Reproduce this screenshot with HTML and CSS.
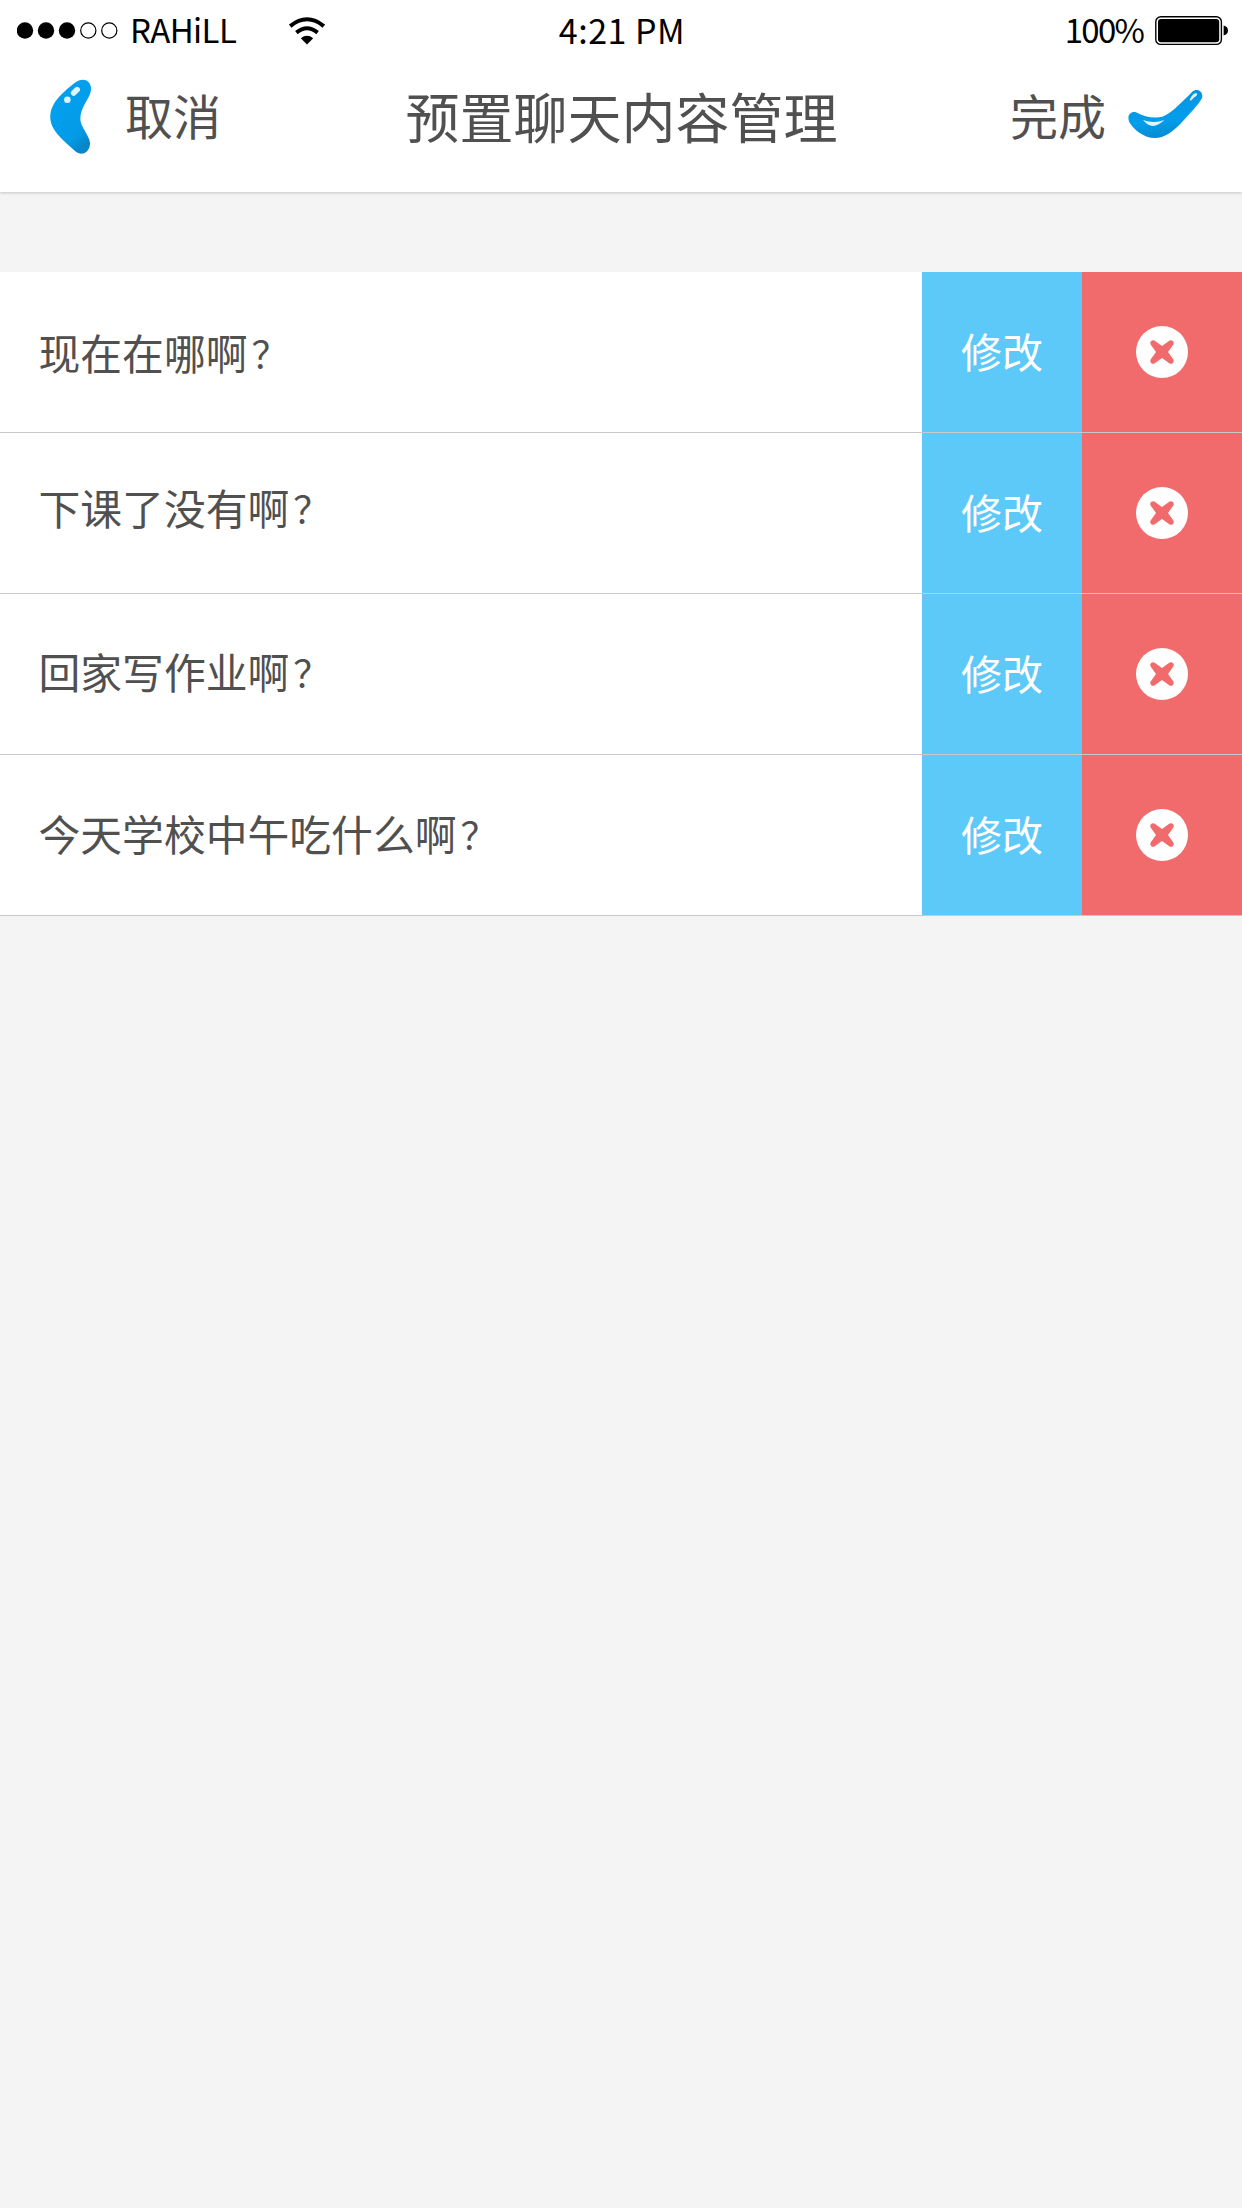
FILE: index.html
```html
<!DOCTYPE html>
<html lang="zh-CN">
<head>
<meta charset="utf-8">
<title>预置聊天内容管理</title>
<link rel="stylesheet" href="styles.css">
</head>
<body>
<svg width="0" height="0" class="defs" aria-hidden="true">
  <symbol id="remove" viewBox="-26 -26 52 52">
    <circle r="26" fill="#fff"/>
    <path fill="#f26b6c" d="M0-6-7.6-11.4A2.8 2.8 0 0 0-11.4-7.6L-6 0-11.4 7.6A2.8 2.8 0 0 0-7.6 11.4L0 6 7.6 11.4A2.8 2.8 0 0 0 11.4 7.6L6 0 11.4-7.6A2.8 2.8 0 0 0 7.6-11.4Z"/>
  </symbol>
</svg>
<header class="header">
  <div class="status">
    <div class="carrier">
      <svg class="signal" width="102" height="18" viewBox="0 0 102 18">
        <circle cx="8" cy="8.500" r="8.2"/><circle cx="29" cy="8.500" r="8.2"/><circle cx="50" cy="8.500" r="8.2"/>
        <g fill="#fff" stroke="#000" stroke-width="1.2"><circle cx="71.3" cy="8.500" r="7.6"/><circle cx="92.300" cy="8.500" r="7.6"/></g>
      </svg>
      <span class="carrier-name">RAHiLL</span>
      <svg class="wifi" width="36" height="28" viewBox="0 0 36 28">
        <path d="M1.2 9.2Q18-4.6 34.8 9.2M7.4 15.6Q18 7 28.6 15.6" fill="none" stroke="#000" stroke-width="4"/>
        <path d="M11.8 21.2Q18 16.4 24.2 21.2L18 27.6Z"/>
      </svg>
    </div>
    <div class="time">4:21 PM</div>
    <div class="power">
      <span class="percent">100%</span>
      <svg class="battery" width="74" height="30" viewBox="0 0 74 30">
        <rect x=".8" y=".8" width="65.6" height="27.6" rx="5" fill="#fff" stroke="#000" stroke-width="1.4"/>
        <rect x="3" y="3" width="61.2" height="23.2" rx="3"/>
        <path d="M68.6 9.5Q73 10.5 73 14.5T68.6 19.5Z"/>
      </svg>
    </div>
  </div>
  <nav class="nav">
    <a class="action">
      <svg class="back" width="42" height="76" viewBox="0 0 42 76">
        <defs><linearGradient id="bean" x1=".1" y1="0" x2=".6" y2="1"><stop offset="0" stop-color="#0598e4"/><stop offset=".3" stop-color="#02a0ee"/><stop offset=".82" stop-color="#049ae6"/><stop offset="1" stop-color="#0886c9"/></linearGradient></defs>
        <path fill="url(#bean)" d="M25 3.7C32-2 41 1 41 9.5C41 15 38 19 34.5 25.5C30 34 29 41 32.3 47C35 53 40 59 40 64.5C40 73 32 78 25 72C17 65 8 57 3.8 50C-1.5 41-.8 32 5 23C10 16 18 9 25 3.7Z"/>
        <g stroke="#e1f3fc" stroke-linecap="round"><path stroke-width="5.6" d="M23.7 14 27.2 10.6"/><path stroke-width="6.4" d="M17.3 20.7h.1"/></g>
      </svg>
      <span class="label">取消</span>
    </a>
    <h1 class="title">预置聊天内容管理</h1>
    <a class="action">
      <span class="label">完成</span>
      <svg class="check" width="75" height="50" viewBox="0 0 75 50">
        <defs><linearGradient id="tick" x1=".3" y1=".1" x2=".5" y2="1"><stop offset="0" stop-color="#0694e0"/><stop offset=".6" stop-color="#029eeb"/><stop offset="1" stop-color="#0789d0"/></linearGradient></defs>
        <path fill="url(#tick)" d="M1.500 33.500C-1.500 27 2 22 8 23.200C17 28 26 30 35 27.500C45 23 56 11 64 3C69-2 76 3 74 9C71 15 64 22 55 32C45 43 36 49 27 49C16 49 6 41 1.500 33.500Z"/>
        <path fill="#e1f3fc" d="M15 31C22 33.500 30 33.500 36 31C35.500 32.500 29 37 25 37C21 37 16.500 33 15 31Z"/>
        <path fill="#e1f3fc" d="M62 10Q64.500 5 67.500 4.300C70 4 69.500 6.500 67.500 7.500C65 8.500 64.500 11 63 11.500Q61.500 12 62 10Z"/>
      </svg>
    </a>
  </nav>
</header>
<main class="list">
  <div class="row first"><div class="message"><span>现在在哪啊</span><span class="mark">？</span></div><a class="edit">修改</a><a class="delete"><svg width="52" height="52"><use href="#remove"/></svg></a></div>
  <div class="row second"><div class="message"><span>下课了没有啊</span><span class="mark">？</span></div><a class="edit">修改</a><a class="delete"><svg width="52" height="52"><use href="#remove"/></svg></a></div>
  <div class="row third"><div class="message"><span>回家写作业啊</span><span class="mark">？</span></div><a class="edit">修改</a><a class="delete"><svg width="52" height="52"><use href="#remove"/></svg></a></div>
  <div class="row"><div class="message"><span>今天学校中午吃什么啊</span><span class="mark">？</span></div><a class="edit">修改</a><a class="delete"><svg width="52" height="52"><use href="#remove"/></svg></a></div>
</main>
</body>
</html>
```
FILE: styles.css
```css
* { box-sizing: border-box; }
body {
  margin: 0;
  min-height: 2208px;
  background: #f4f4f4;
  color: #505050;
  font-family: "Noto Sans CJK SC", "Noto Sans", sans-serif;
  white-space: nowrap;
}
svg { display: block; flex: none; }
.defs { display: none; }
.header {
  height: 192px;
  background: #fff;
  box-shadow: 0 1px 3px rgba(0, 0, 0, .2);
}
.status {
  display: grid;
  grid-template-columns: 1fr auto 1fr;
  align-items: center;
  height: 60px;
  padding: 0 13px 0 17px;
  color: #000;
  font-size: 33px;
  line-height: 58px;
}
.carrier, .power { display: flex; align-items: center; }
.carrier-name { width: 141px; margin-left: 11px; padding-bottom: 4px; letter-spacing: -.6px; }
.wifi { margin-left: 18px; }
.time { margin-right: 2px; padding-bottom: 3px; font-size: 34px; letter-spacing: .5px; }
.power { justify-content: flex-end; gap: 12px; }
.battery { margin-bottom: 1px; }
.percent { padding-bottom: 4px; letter-spacing: -1.8px; }
.nav {
  display: grid;
  grid-template-columns: 1fr auto 1fr;
  align-items: center;
  height: 114px;
  padding: 0 39px 0 50px;
}
.action { display: flex; align-items: center; font-size: 48px; line-height: 70px; }
.label { padding-bottom: 7px; }
.action:first-child { gap: 33px; }
.action:last-child { justify-content: flex-end; gap: 22px; }
.check { margin-bottom: 7px; }
.title { margin: 0 10px 2px 0; font-size: 54px; font-weight: 400; line-height: 78px; }
.list { margin-top: 80px; }
.row {
  display: grid;
  grid-template-columns: 1fr 160px 160px;
  height: 161px;
  border-bottom: 1px solid #c9c9c9;
  background: #fff;
  font-size: 41.8px;
}
.message { display: flex; align-items: center; padding: 0 0 5px 38.5px; }
.mark { padding: 2px 0 0 4px; font-size: 37px; }
.first .message { padding-bottom: 1px; }
.second .message { padding-bottom: 12px; }
.third .message { padding-bottom: 7px; }
.edit, .delete { display: flex; align-items: center; justify-content: center; color: #fff; }
.edit { padding-bottom: 5px; background: #5dc9f8; font-size: 41px; }
.delete { background: #f26b6c; }
```
